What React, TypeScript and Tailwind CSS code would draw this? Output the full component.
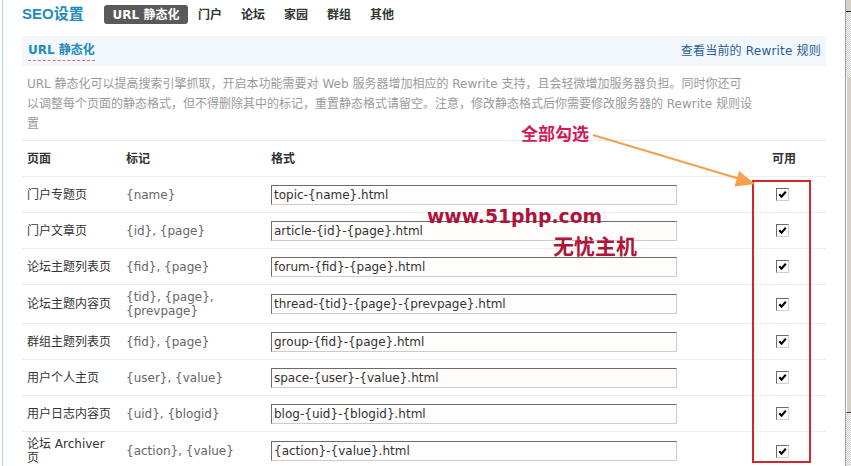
const rows = [
  { page: ["门户专题页"], tags: ["{name}"], fmt: "topic-{name}.html", h: "h-[36px]" },
  { page: ["门户文章页"], tags: ["{id}, {page}"], fmt: "article-{id}-{page}.html", h: "h-[36px]" },
  { page: ["论坛主题列表页"], tags: ["{fid}, {page}"], fmt: "forum-{fid}-{page}.html", h: "h-[36px]" },
  {
    page: ["论坛主题内容页"],
    tags: ["{tid}, {page},", "{prevpage}"],
    fmt: "thread-{tid}-{page}-{prevpage}.html",
    h: "h-[39px]",
  },
  { page: ["群组主题列表页"], tags: ["{fid}, {page}"], fmt: "group-{fid}-{page}.html", h: "h-[36px]" },
  { page: ["用户个人主页"], tags: ["{user}, {value}"], fmt: "space-{user}-{value}.html", h: "h-[36px]" },
  { page: ["用户日志内容页"], tags: ["{uid}, {blogid}"], fmt: "blog-{uid}-{blogid}.html", h: "h-[36px]" },
  { page: ["论坛 Archiver", "页"], tags: ["{action}, {value}"], fmt: "{action}-{value}.html", h: "h-[39px]" },
];

const Check = () => (
  <span className="flex h-[13px] w-[13px] items-center justify-center border border-t-[#6b6b6b] border-l-[#6b6b6b] border-r-[#d0d0d0] border-b-[#d0d0d0] bg-white">
    <svg width="9" height="9" viewBox="0 0 9 9">
      <path d="M1.3 4.2 L3.5 6.6 L7.8 1.8" fill="none" stroke="#000" strokeWidth="2.1" />
    </svg>
  </span>
);

export default function App() {
  return (
    <div className="relative flex h-[466px] w-[851px] overflow-hidden bg-white font-['DejaVu_Sans','Noto_Sans_CJK_SC',sans-serif] text-[12px]">
      {/* left frame line */}
      <div className="w-[2px] shrink-0" />
      <div className="w-px shrink-0 bg-[#b3d0ea]" />

      {/* main */}
      <div className="w-[842px] shrink-0 px-[19px]">
        {/* tabs */}
        <div className="mt-[5px] flex h-[19px] items-center">
          <span className="w-[82px] font-['Liberation_Sans','Noto_Sans_CJK_SC',sans-serif] text-[15px] font-bold text-[#228bbb]">
            SEO设置
          </span>
          <span className="flex h-[19px] w-[84px] items-center justify-center rounded-[3px] bg-[#5a5a5a] font-bold text-white">
            URL 静态化
          </span>
          <div className="ml-[10px] flex gap-[19px] font-bold text-[#333]">
            {["门户", "论坛", "家园", "群组", "其他"].map((t) => (
              <span key={t}>{t}</span>
            ))}
          </div>
        </div>

        {/* section bar */}
        <div className="mt-[12px] flex h-[30px] items-center justify-between bg-[#f2f7fc] pl-[6px] pr-[5px]">
          <span className="border-b border-dashed border-[#e46a7a] pb-[1px] font-bold text-[#228bbb]">
            URL 静态化
          </span>
          <span className="tracking-[0.2px] text-[#2b5b9a]">查看当前的 Rewrite 规则</span>
        </div>

        {/* description */}
        <div className="mt-[8px] px-[5px] leading-[20px] whitespace-nowrap text-[#9a9a9a]">
          <div>URL 静态化可以提高搜索引擎抓取，开启本功能需要对 Web 服务器增加相应的 Rewrite 支持，且会轻微增加服务器负担。同时你还可</div>
          <div>以调整每个页面的静态格式，但不得删除其中的标记，重置静态格式请留空。注意，修改静态格式后你需要修改服务器的 Rewrite 规则设</div>
          <div>置</div>
        </div>

        {/* table */}
        <div className="mt-[6px] border-t border-[#eeeeee]">
          <div className="grid h-[36px] grid-cols-[99px_145px_474px_86px] items-center border-b border-[#eeeeee] font-bold text-[#333]">
            <span className="pl-[5px]">页面</span>
            <span className="pl-[5px]">标记</span>
            <span className="pl-[5px]">格式</span>
            <span className="pl-[2px] text-center">可用</span>
          </div>
          {rows.map((r, i) => (
            <div
              key={i}
              className={`grid ${r.h} grid-cols-[99px_145px_474px_86px] items-center border-b border-[#eeeeee]`}
            >
              <div className="pl-[5px] leading-[14px] text-[#333]">
                {r.page.map((p) => (
                  <div key={p}>{p}</div>
                ))}
              </div>
              <div className="pl-[5px] leading-[14px] text-[#666]">
                {r.tags.map((t) => (
                  <div key={t}>{t}</div>
                ))}
              </div>
              <div className="pl-[5px]">
                <input
                  readOnly
                  value={r.fmt}
                  className="h-[20px] w-[406px] border border-t-[#6b6b6b] border-l-[#6b6b6b] border-r-[#cccccc] border-b-[#cccccc] bg-[#fffcfc] px-[2px] text-[12px] text-[#333] outline-none"
                />
              </div>
              <div className="flex justify-center pr-[2px]">
                <Check />
              </div>
            </div>
          ))}
        </div>
      </div>

      {/* scrollbar */}
      <div className="flex w-[6px] shrink-0 flex-col border-l border-[#a0a0a0]">
        <div className="h-[12px] shrink-0 border-b border-[#222] bg-[#d4d0c8]" />
        <div className="h-[65px] shrink-0 bg-[repeating-conic-gradient(#c8c8c8_0_25%,#ffffff_0_50%)] bg-[length:2px_2px]" />
        <div className="h-[336px] shrink-0 border-l border-b border-l-white border-b-[#404040] bg-[#d4d0c8]" />
        <div className="flex-1 bg-[repeating-conic-gradient(#c8c8c8_0_25%,#ffffff_0_50%)] bg-[length:2px_2px]" />
      </div>

      {/* annotations */}
      <div className="pointer-events-none absolute left-[752px] top-[180px] h-[283px] w-[59px] border-2 border-[#d4252d]" />
      <svg className="pointer-events-none absolute left-0 top-0" width="851" height="466">
        <line x1="593" y1="135" x2="740" y2="179" stroke="#f4a04c" strokeWidth="2" />
        <polygon points="755,184 734.5,186.5 739.1,171.1" fill="#f4a04c" />
      </svg>
      <span className="absolute left-[521px] top-[123px] font-['Noto_Sans_CJK_SC',sans-serif] text-[17px] font-bold leading-[20px] text-[#d3195a]">
        全部勾选
      </span>
      <span className="absolute left-[427px] top-[205px] text-[18.8px] font-bold leading-[24px] text-[#b0123a]">
        www.51php.com
      </span>
      <span className="absolute left-[553px] top-[232px] font-['Noto_Sans_CJK_SC',sans-serif] text-[21px] font-bold leading-[26px] text-[#b0163a]">
        无忧主机
      </span>
    </div>
  );
}
